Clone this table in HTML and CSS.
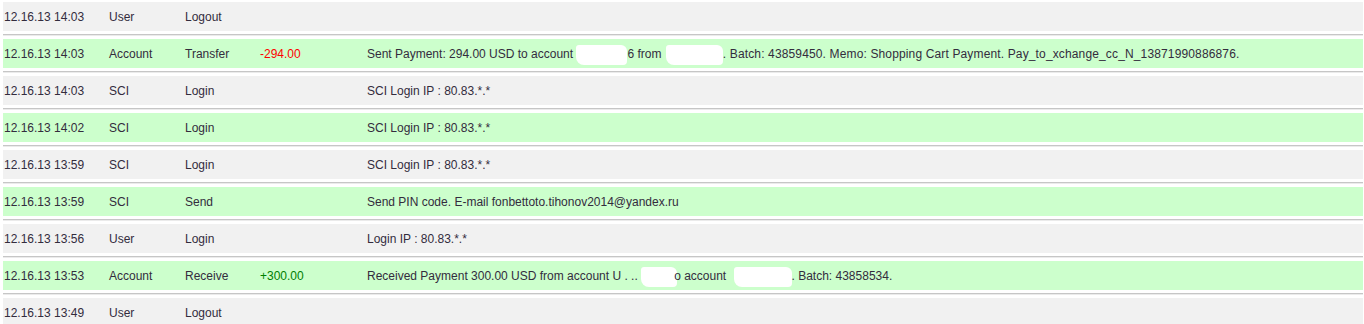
FILE: index.html
```html
<!DOCTYPE html>
<html>
<head>
<meta charset="utf-8">
<link rel="stylesheet" href="styles.css">
</head>
<body>
<div class="log">
  <div class="entry"><div class="row gray"><span>12.16.13 14:03</span><span>User</span><span>Logout</span><span></span><span></span></div></div>
  <div class="entry"><div class="row green"><span>12.16.13 14:03</span><span>Account</span><span>Transfer</span><span class="neg">-294.00</span><span>Sent Payment: 294.00 USD to account <i class="blob b1"></i>6 from <i class="blob b2"></i><span class="wide">. Batch: 43859450. Memo: Shopping Cart Payment. Pay_to_xchange_cc_N_13871990886876.</span></span></div></div>
  <div class="entry"><div class="row gray"><span>12.16.13 14:03</span><span>SCI</span><span>Login</span><span></span><span>SCI Login IP : 80.83.*.*</span></div></div>
  <div class="entry"><div class="row green"><span>12.16.13 14:02</span><span>SCI</span><span>Login</span><span></span><span>SCI Login IP : 80.83.*.*</span></div></div>
  <div class="entry"><div class="row gray"><span>12.16.13 13:59</span><span>SCI</span><span>Login</span><span></span><span>SCI Login IP : 80.83.*.*</span></div></div>
  <div class="entry"><div class="row green"><span>12.16.13 13:59</span><span>SCI</span><span>Send</span><span></span><span>Send PIN code. E-mail fonbettoto.tihonov2014@yandex.ru</span></div></div>
  <div class="entry"><div class="row gray"><span>12.16.13 13:56</span><span>User</span><span>Login</span><span></span><span>Login IP : 80.83.*.*</span></div></div>
  <div class="entry"><div class="row green"><span>12.16.13 13:53</span><span>Account</span><span>Receive</span><span class="pos">+300.00</span><span>Received Payment 300.00 USD from account U . .. <i class="blob b3"></i>o account <i class="blob b4"></i>. Batch: 43858534.</span></div></div>
  <div class="entry"><div class="row gray"><span>12.16.13 13:49</span><span>User</span><span>Logout</span><span></span><span></span></div></div>
</div>
</body>
</html>
```
FILE: styles.css
```css
html, body {
  margin: 0;
  padding: 0;
  background: #ffffff;
}
.log {
  margin: 2px 1px 0 3px;
  font-family: "Liberation Sans", Arial, sans-serif;
  font-size: 12px;
  color: #332c3d;
}
.entry:not(:last-child)::after {
  content: "";
  display: block;
  margin: 3px 0;
  border-top: 1px solid #c6c6c6;
  border-bottom: 1px solid #ebebeb;
}
.row {
  display: grid;
  grid-template-columns: 105px 76px 75px 107px 1fr;
  box-sizing: border-box;
  height: 29px;
  padding: 2px 0 0 1px;
  line-height: 27px;
  white-space: nowrap;
}
.gray { background: #f1f1f1; }
.green { background: #ccffcc; }
.neg { color: #ff0000; }
.pos { color: #008000; }
.wide { letter-spacing: 0.14px; }
.blob {
  display: inline-block;
  vertical-align: middle;
  height: 20px;
  background: #ffffff;
  border-radius: 3px 6px 4px 8px;
}
.b1 { width: 51px; }
.b2 { width: 57px; margin-left: 1px; }
.b3 { width: 36px; margin-right: -3px; }
.b4 { width: 58px; margin-left: 4px; }
```
